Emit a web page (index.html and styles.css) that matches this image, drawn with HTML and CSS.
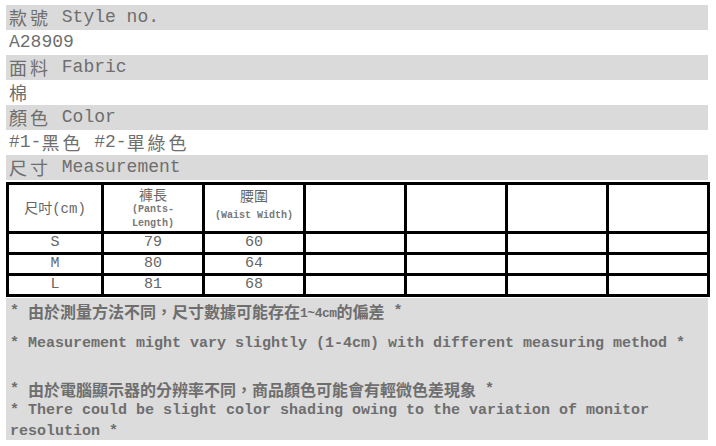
FILE: index.html
```html
<!DOCTYPE html>
<html lang="zh-Hant">
<head>
<meta charset="utf-8">
<link rel="stylesheet" href="styles.css">
</head>
<body>
<div class="page">
  <div class="row gray"><span class="cj">款號</span> Style no.</div>
  <div class="row">A28909</div>
  <div class="row gray"><span class="cj">面料</span> Fabric</div>
  <div class="row"><span class="cj">棉</span></div>
  <div class="row gray"><span class="cj">顏色</span> Color</div>
  <div class="row">#1-<span class="cj">黑色</span> #2-<span class="cj">單綠色</span></div>
  <div class="row gray"><span class="cj">尺寸</span> Measurement</div>

  <table class="size">
    <colgroup>
      <col class="c1"><col class="cn"><col class="cn"><col class="cn"><col class="cn"><col class="cn"><col class="cn">
    </colgroup>
    <tr class="head">
      <td><span class="hcj">尺吋</span><span class="hl">(cm)</span></td>
      <td><div class="hcj">褲長</div><div class="small">(Pants-<br>Length)</div></td>
      <td><div class="hcj">腰圍</div><div class="small pad">(Waist Width)</div></td>
      <td></td><td></td><td></td><td></td>
    </tr>
    <tr><td>S</td><td>79</td><td>60</td><td></td><td></td><td></td><td></td></tr>
    <tr><td>M</td><td>80</td><td>64</td><td></td><td></td><td></td><td></td></tr>
    <tr><td>L</td><td>81</td><td>68</td><td></td><td></td><td></td><td></td></tr>
  </table>

  <div class="notes">
    <div class="n1">* <span class="fcj">由於測量方法不同，尺寸數據可能存在</span><span class="fl">1~4cm</span><span class="fcj">的偏差</span> *</div>
    <div class="n2">* Measurement might vary slightly (1-4cm) with different measuring method *</div>
    <div class="n3">* <span class="fcj">由於電腦顯示器的分辨率不同，商品顏色可能會有輕微色差現象</span> *</div>
    <div class="n4">* There could be slight color shading owing to the variation of monitor resolution *</div>
  </div>
</div>
</body>
</html>
```
FILE: styles.css
```css
html, body {
  margin: 0;
  padding: 0;
  background: #ffffff;
}
.page {
  padding: 5px 8px 0 6px;
  width: 702px;
  font-family: "Liberation Mono", "Noto Sans CJK TC", monospace;
  color: #6e6e6e;
}
.row {
  height: 25px;
  line-height: 25px;
  font-size: 18px;
  padding-left: 3px;
  white-space: nowrap;
  overflow: hidden;
}
.row.gray {
  background: #dadada;
}
.cj {
  font-family: "Noto Sans CJK TC", sans-serif;
  font-size: 18px;
  letter-spacing: 3px;
  line-height: 25px;
  vertical-align: top;
}
.size {
  margin-top: 2px;
  width: 702px;
  border-collapse: collapse;
  table-layout: fixed;
  border: 3px solid #000;
}
.c1 {
  width: 95px;
}
.cn {
  width: 101px;
}
.size td {
  border: 3px solid #000;
  text-align: center;
  padding: 0;
  height: 18px;
  font-size: 15px;
  line-height: 18px;
  color: #666;
}
.size tr.head td {
  height: 46px;
  vertical-align: middle;
}
.hcj {
  font-family: "Noto Sans CJK TC", sans-serif;
  font-size: 14px;
  line-height: 18px;
  color: #666;
}
.hl {
  font-size: 14px;
}
.small {
  font-size: 10px;
  font-weight: bold;
  line-height: 14px;
  color: #777;
}
.small.pad {
  padding-top: 5px;
  padding-bottom: 8px;
}
.notes {
  margin-top: 1px;
  background: #dcdcdc;
  height: 142px;
  padding: 3px 0 0 4px;
  box-sizing: border-box;
  font-size: 15px;
  font-weight: bold;
  line-height: 21px;
  color: #6e6e6e;
}
.fcj {
  font-family: "Noto Sans CJK SC", sans-serif;
  font-size: 16px;
  font-weight: bold;
  line-height: 21px;
  vertical-align: top;
}
.fl {
  font-size: 13px;
  line-height: 1;
  vertical-align: -2px;
  letter-spacing: -0.5px;
}
.n2 {
  margin-top: 11px;
}
.n3 {
  margin-top: 25px;
}
.n4 {
  width: 660px;
}
```
